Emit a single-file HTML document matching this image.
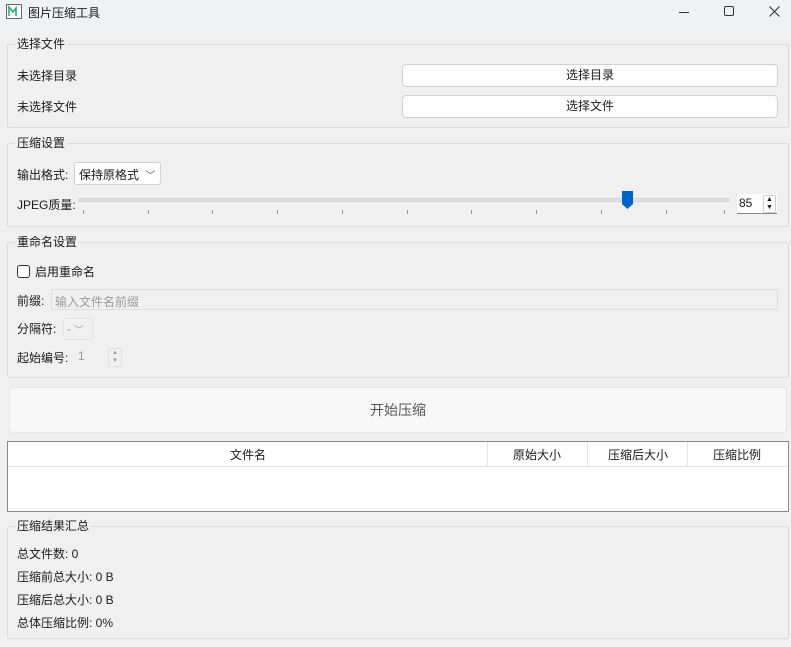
<!DOCTYPE html><html><head><meta charset="utf-8"><style>
*{box-sizing:border-box;margin:0;padding:0}
body{width:791px;height:647px;background:#f0f0f0;font-family:"Liberation Sans","Noto Sans CJK SC",sans-serif;font-size:12px;color:#1a1a1a;position:relative;overflow:hidden}
.a{position:absolute;white-space:nowrap}
.g{position:absolute;border:1px solid #dcdcdc;border-radius:2px}
.gt{position:absolute;background:#f0f0f0;padding:0 2px;line-height:14px}
.btn{position:absolute;background:#fdfdfd;border:1px solid #d0d0d0;border-radius:4px;text-align:center;line-height:20px}
.tick{position:absolute;top:210px;width:1px;height:4px;background:#999}
</style></head><body>
<div class="a" style="left:0;top:0;width:791px;height:25px;background:#eff2f5"></div>
<svg class="a" style="left:6px;top:4px" width="16" height="15"><rect x="0.5" y="0.5" width="15" height="14" fill="#fff" stroke="#666"/><path d="M3 12V3l4 5 3-4v8" stroke="#2a6" stroke-width="1.5" fill="none"/></svg>
<div class="a" style="left:28px;top:4px;font-size:12px">图片压缩工具</div>
<div class="a" style="left:679px;top:12px;width:10px;height:1px;background:#333"></div>
<div class="a" style="left:724px;top:6px;width:10px;height:10px;border:1px solid #333;border-radius:2px"></div>
<svg class="a" style="left:769px;top:6px" width="11" height="11"><path d="M0.5 0.5l10 10M10.5 0.5l-10 10" stroke="#333" stroke-width="1.1"/></svg>

<div class="g" style="left:7px;top:44px;width:782px;height:84px"></div>
<div class="gt" style="left:15px;top:37px">选择文件</div>
<div class="a" style="left:17px;top:67px">未选择目录</div>
<div class="a" style="left:17px;top:98px">未选择文件</div>
<div class="btn" style="left:402px;top:64px;width:376px;height:23px">选择目录</div>
<div class="btn" style="left:402px;top:95px;width:376px;height:23px">选择文件</div>

<div class="g" style="left:7px;top:143px;width:782px;height:84px"></div>
<div class="gt" style="left:15px;top:136px">压缩设置</div>
<div class="a" style="left:17px;top:166px">输出格式:</div>
<div class="a" style="left:74px;top:162px;width:87px;height:23px;background:#fff;border:1px solid #d0d0d0;border-radius:3px;padding:3px 0 0 4px">保持原格式 <span style="font-size:10px;color:#555;margin-left:3px">﹀</span></div>
<div class="a" style="left:17px;top:196px">JPEG质量:</div>
<div class="a" style="left:78px;top:198px;width:652px;height:4px;background:#e0e0e0;border:1px solid #d4d4d4;border-radius:2px"></div>
<svg class="a" style="left:621px;top:190px" width="13" height="20"><path d="M1 1h11v13l-5.5 5L1 14z" fill="#0063c8"/></svg>
<div class="tick" style="left:83px"></div><div class="tick" style="left:148px"></div><div class="tick" style="left:212px"></div><div class="tick" style="left:277px"></div><div class="tick" style="left:342px"></div><div class="tick" style="left:407px"></div><div class="tick" style="left:471px"></div><div class="tick" style="left:536px"></div><div class="tick" style="left:601px"></div><div class="tick" style="left:666px"></div><div class="tick" style="left:724px"></div>
<div class="a" style="left:737px;top:194px;width:40px;height:20px;background:#fff;border-bottom:1px solid #888;padding:2px 0 0 2px">85</div>
<div class="a" style="left:763px;top:195px;width:13px;height:18px;border:1px solid #ccc;border-radius:2px;font-size:7px;line-height:8px;text-align:center;background:#fff">▲<br>▼</div>

<div class="g" style="left:7px;top:242px;width:782px;height:136px"></div>
<div class="gt" style="left:15px;top:235px">重命名设置</div>
<div class="a" style="left:17px;top:265px;width:13px;height:13px;border:1px solid #333;border-radius:3px;background:#fff"></div>
<div class="a" style="left:35px;top:263px">启用重命名</div>
<div class="a" style="left:17px;top:292px">前缀:</div>
<div class="a" style="left:51px;top:289px;width:727px;height:21px;border:1px solid #ddd;border-radius:2px;color:#9a9a9a;padding:3px 0 0 3px">输入文件名前缀</div>
<div class="a" style="left:17px;top:320px">分隔符:</div>
<div class="a" style="left:63px;top:318px;width:30px;height:22px;border:1px solid #e2e2e2;border-radius:3px;color:#999;padding:3px 0 0 3px">- <span style="font-size:9px">﹀</span></div>
<div class="a" style="left:17px;top:349px">起始编号:</div>
<div class="a" style="left:78px;top:349px;color:#999">1</div>
<div class="a" style="left:108px;top:348px;width:14px;height:19px;border:1px solid #e0e0e0;font-size:6px;line-height:8px;text-align:center;color:#999">▲<br>▼</div>

<div class="a" style="left:9px;top:387px;width:778px;height:46px;background:#f8f8f8;border:1px solid #e6e6e6;border-radius:4px;text-align:center;line-height:44px;font-size:14px;color:#555">开始压缩</div>

<div class="a" style="left:7px;top:441px;width:782px;height:71px;background:#fff;border:1px solid #8a8a8a"></div>
<div class="a" style="left:8px;top:442px;width:780px;height:25px;border-bottom:1px solid #e5e5e5"></div>
<div class="a" style="left:487px;top:442px;width:1px;height:25px;background:#e5e5e5"></div>
<div class="a" style="left:587px;top:442px;width:1px;height:25px;background:#e5e5e5"></div>
<div class="a" style="left:687px;top:442px;width:1px;height:25px;background:#e5e5e5"></div>
<div class="a" style="left:230px;top:446px">文件名</div>
<div class="a" style="left:513px;top:446px">原始大小</div>
<div class="a" style="left:608px;top:446px">压缩后大小</div>
<div class="a" style="left:713px;top:446px">压缩比例</div>

<div class="g" style="left:7px;top:526px;width:782px;height:113px"></div>
<div class="gt" style="left:15px;top:519px">压缩结果汇总</div>
<div class="a" style="left:17px;top:545px">总文件数: 0</div>
<div class="a" style="left:17px;top:568px">压缩前总大小: 0 B</div>
<div class="a" style="left:17px;top:591px">压缩后总大小: 0 B</div>
<div class="a" style="left:17px;top:614px">总体压缩比例: 0%</div>
</body></html>
